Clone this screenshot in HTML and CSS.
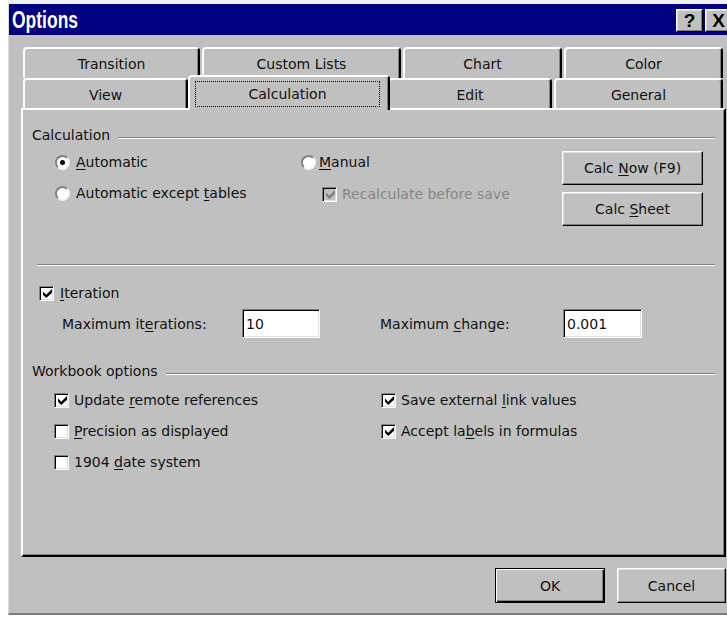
FILE: index.html
```html
<!DOCTYPE html>
<html lang="en">
<head>
<meta charset="utf-8">
<title>Options</title>
<link rel="stylesheet" href="styles.css">
</head>
<body>
<div class="window">
  <div class="titlebar">
    <span class="title">Options</span>
    <div class="title-buttons">
      <span class="tbtn">?</span>
      <span class="tbtn">X</span>
    </div>
  </div>

  <div class="content">
    <div class="tabs">
      <div class="tab-row back">
        <div class="tab w-transition">Transition</div>
        <div class="tab w-custom">Custom Lists</div>
        <div class="tab w-chart">Chart</div>
        <div class="tab w-color">Color</div>
      </div>
      <div class="tab-row front">
        <div class="tab w-view">View</div>
        <div class="tab active"><span class="focus">Calculation</span></div>
        <div class="tab w-edit">Edit</div>
        <div class="tab w-general">General</div>
      </div>
    </div>

    <div class="panel">
      <div class="group-head">
        <span>Calculation</span>
        <span class="rule"></span>
      </div>

      <div class="calc-body">
        <div class="col-a">
          <label class="opt"><span class="radio on"></span><span><u>A</u>utomatic</span></label>
          <label class="opt"><span class="radio"></span><span>Automatic except <u>t</u>ables</span></label>
        </div>
        <div class="col-b">
          <label class="opt opt-tight"><span class="radio"></span><span><u>M</u>anual</span></label>
          <label class="opt indent disabled">
            <span class="check off-state">
              <svg viewBox="0 0 7 7"><path d="M0 2 L2.5 4.5 L7 0 L7 3 L2.5 7 L0 4.5 Z"/></svg>
            </span>
            <span>Recalculate before save</span>
          </label>
        </div>
        <div class="col-c">
          <button class="btn btn-calc"><span>Calc <u>N</u>ow (F9)</span></button>
          <button class="btn btn-calc"><span>Calc <u>S</u>heet</span></button>
        </div>
      </div>

      <div class="sep"></div>

      <label class="opt iter-row">
        <span class="check">
          <svg viewBox="0 0 7 7"><path d="M0 2 L2.5 4.5 L7 0 L7 3 L2.5 7 L0 4.5 Z"/></svg>
        </span>
        <span><u>I</u>teration</span>
      </label>

      <div class="fields">
        <span class="field-label first">Maximum it<u>e</u>rations:</span>
        <span class="field f-iter">10</span>
        <span class="field-label second">Maximum <u>c</u>hange:</span>
        <span class="field f-change">0.001</span>
      </div>

      <div class="group-head wb-head">
        <span>Workbook options</span>
        <span class="rule"></span>
      </div>

      <div class="wb-grid">
        <label class="opt">
          <span class="check"><svg viewBox="0 0 7 7"><path d="M0 2 L2.5 4.5 L7 0 L7 3 L2.5 7 L0 4.5 Z"/></svg></span>
          <span>Update <u>r</u>emote references</span>
        </label>
        <label class="opt">
          <span class="check"><svg viewBox="0 0 7 7"><path d="M0 2 L2.5 4.5 L7 0 L7 3 L2.5 7 L0 4.5 Z"/></svg></span>
          <span>Save external <u>l</u>ink values</span>
        </label>
        <label class="opt">
          <span class="check"></span>
          <span><u>P</u>recision as displayed</span>
        </label>
        <label class="opt">
          <span class="check"><svg viewBox="0 0 7 7"><path d="M0 2 L2.5 4.5 L7 0 L7 3 L2.5 7 L0 4.5 Z"/></svg></span>
          <span>Accept la<u>b</u>els in formulas</span>
        </label>
        <label class="opt">
          <span class="check"></span>
          <span>1904 <u>d</u>ate system</span>
        </label>
      </div>
    </div>

    <div class="actions">
      <button class="btn default btn-ok"><span>OK</span></button>
      <button class="btn btn-cancel"><span>Cancel</span></button>
    </div>
  </div>
</div>
</body>
</html>
```

FILE: styles.css
```css
* {
  box-sizing: border-box;
}

html,
body {
  margin: 0;
  padding: 0;
  background: #fff;
  overflow: hidden;
}

body {
  font-family: "DejaVu Sans", sans-serif;
  font-size: 14px;
  line-height: 18px;
  color: #111;
}

u {
  text-underline-offset: 2px;
}

/* window frame */
.window {
  margin-left: 8px;
  width: 726px;
  height: 615px;
  background: #c0c0c0;
  border-left: 1px solid #dcdcdc;
  border-top: 4px solid #f0f0f0;
  border-bottom: 2px solid #7c7c7c;
  display: flex;
  flex-direction: column;
}

.titlebar {
  height: 31px;
  background: #000080;
  display: flex;
  align-items: center;
  padding: 0 2px 0 3px;
  flex: none;
}

.title {
  color: #fff;
  font-family: "Liberation Sans", Arial, sans-serif;
  font-weight: bold;
  font-size: 23px;
  transform: scaleX(0.76);
  transform-origin: left center;
}

.title-buttons {
  margin-left: auto;
  display: flex;
  gap: 2px;
  margin-top: 2px;
}

.tbtn {
  width: 27px;
  height: 23px;
  background: #c0c0c0;
  border: 1px solid;
  border-color: #fff #000 #000 #fff;
  box-shadow: inset -1px -1px #808080, inset 1px 1px #dfdfdf;
  font-family: "Liberation Sans", Arial, sans-serif;
  font-weight: bold;
  font-size: 19px;
  color: #000;
  display: flex;
  align-items: center;
  justify-content: center;
}

.content {
  padding: 12px 0 0 12px;
}

/* tab strip */
.tabs {
  margin-left: 2px;
  width: 700px;
}

.tab-row {
  display: flex;
}

.tab-row.back {
  height: 31px;
}

.tab-row.front {
  height: 30px;
}

.tab {
  margin-right: 2px;
  border: 2px solid;
  border-bottom: 0;
  border-color: #fff #000 transparent #fff;
  border-radius: 4px 4px 0 0;
  box-shadow: inset -1px 0 #808080;
  display: flex;
  align-items: center;
  justify-content: center;
  padding-top: 1px;
  white-space: nowrap;
  background: #c0c0c0;
}

.tab:last-child {
  margin-right: 0;
}

.w-transition { width: 177px; }
.w-custom { width: 199px; }
.w-chart { width: 159px; }
.w-color { width: 159px; }
.w-view { width: 165px; }
.w-edit { width: 164px; }
.w-general { width: 169px; }

.tab.active {
  position: relative;
  z-index: 1;
  width: 202px;
  height: 35px;
  margin: -3px -2px -2px -2px;
  padding: 4px 8px 3px 5px;
  align-items: stretch;
}

.focus {
  flex: 1;
  border: 1px dotted #000;
  display: flex;
  align-items: center;
  justify-content: center;
  padding-bottom: 1px;
}

/* page panel */
.panel {
  width: 705px;
  height: 449px;
  border: 2px solid;
  border-color: #fff #000 #000 #fff;
  box-shadow: inset -1px -1px #808080;
  padding: 16px 9px 0 0;
}

.group-head {
  display: flex;
  align-items: center;
  height: 18px;
  margin-left: 9px;
}

.group-head .rule {
  flex: 1;
  margin-left: 8px;
  margin-top: 5px;
  border-top: 1px solid #808080;
  border-bottom: 1px solid #fff;
}

.calc-body {
  display: flex;
  height: 82px;
}

.col-a {
  margin-left: 32px;
  width: 246px;
  padding-top: 9px;
  display: flex;
  flex-direction: column;
  gap: 13px;
}

.col-b {
  width: 261px;
  padding-top: 9px;
  display: flex;
  flex-direction: column;
  gap: 14px;
}

.col-c {
  padding-top: 7px;
  display: flex;
  flex-direction: column;
  gap: 7px;
}

.opt {
  display: flex;
  align-items: center;
  height: 18px;
  gap: 5px;
  white-space: nowrap;
}

.col-a .opt {
  gap: 6px;
}

.opt-tight {
  gap: 3px;
}

.opt.indent {
  margin-left: 21px;
}

.opt.disabled {
  color: #868686;
}

.radio {
  flex: none;
  width: 15px;
  height: 15px;
  border-radius: 50%;
  background: #fff;
  border: 2px solid;
  border-color: #808080 #f4f4f4 #f4f4f4 #808080;
  display: flex;
  align-items: center;
  justify-content: center;
}

.radio.on::after {
  content: "";
  width: 5px;
  height: 5px;
  border-radius: 50%;
  background: #000;
}

.check {
  flex: none;
  width: 15px;
  height: 15px;
  background: #fff;
  border: 1px solid;
  border-color: #808080 #fff #fff #808080;
  box-shadow: inset 1px 1px #000, inset -1px -1px #dfdfdf;
  display: flex;
  align-items: center;
  justify-content: center;
  padding: 1px 0 0 1px;
}

.check svg {
  width: 9px;
  height: 9px;
  fill: #000;
}

.check.off-state {
  background: #c0c0c0;
}

.check.off-state svg {
  fill: #808080;
}

.btn {
  font-family: inherit;
  font-size: 14px;
  line-height: 18px;
  color: #111;
  background: #c0c0c0;
  border: 1px solid;
  border-color: #fff #000 #000 #fff;
  box-shadow: inset -1px -1px #808080, inset 1px 1px #dfdfdf;
  display: flex;
  align-items: center;
  justify-content: center;
  padding: 0;
  margin: 0;
  white-space: nowrap;
}

.btn-calc {
  width: 141px;
  height: 34px;
}

.btn.default {
  border: 1px solid #000;
  box-shadow: inset 1px 1px #fff, inset -1px -1px #000, inset -2px -2px #808080;
}

.sep {
  margin: 38px 0 0 14px;
  border-top: 1px solid #808080;
  border-bottom: 1px solid #fff;
}

.iter-row {
  margin: 18px 0 0 16px;
  gap: 6px;
}

.fields {
  display: flex;
  align-items: center;
  height: 29px;
  margin-top: 7px;
  padding-left: 39px;
}

.field-label.first {
  width: 180px;
}

.field-label.second {
  width: 183px;
  margin-left: 60px;
}

.field {
  height: 29px;
  background: #fff;
  border: 1px solid;
  border-color: #808080 #fff #fff #808080;
  box-shadow: inset 1px 1px #000, inset -1px -1px #dfdfdf;
  padding-left: 3px;
  display: flex;
  align-items: center;
}

.f-iter { width: 78px; }
.f-change { width: 79px; }

.wb-head {
  margin-top: 24px;
}

.wb-grid {
  display: grid;
  grid-template-columns: 327px auto;
  grid-auto-rows: 18px;
  row-gap: 13px;
  margin: 11px 0 0 31px;
}

/* dialog buttons */
.actions {
  display: flex;
  justify-content: flex-end;
  gap: 12px;
  width: 705px;
  margin-top: 11px;
}

.btn-ok {
  width: 110px;
  height: 35px;
}

.btn-cancel {
  width: 109px;
  height: 35px;
}
```
